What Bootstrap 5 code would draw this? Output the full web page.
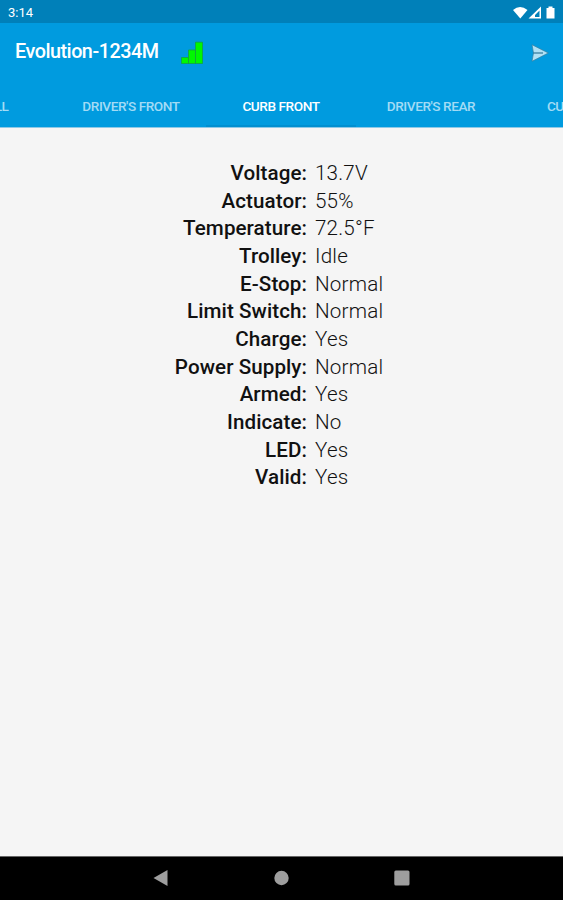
<!DOCTYPE html>
<html lang="en">
<head>
<meta charset="utf-8">
<meta name="viewport" content="width=device-width, initial-scale=1">
<title>Evolution-1234M</title>
<link href="https://cdn.jsdelivr.net/npm/bootstrap@5.3.0/dist/css/bootstrap.min.css" rel="stylesheet">
<style>
body{font-family:Roboto,sans-serif;background:#f5f5f5;color:#111}
.status-bar{height:23px;background:#0080b9;font-size:13px;padding:2px 7px 0 8px}
.app-head{background:#009bdf;height:105px;border-bottom:1px solid #8fc9e6}
.title-bar{height:61px;padding:0 14px 0 15px}
.title-text{font-size:19.8px;font-weight:500;line-height:24px;margin-top:-3px;width:143px;letter-spacing:-.48px}
.signal{margin:-2px 0 0 23px}
.send{margin-top:-1px}
.tab-strip{height:43px;margin-left:-94px;width:750px}
.tab-strip .nav-link{width:150px;padding:0;height:43px;line-height:45px;font-size:13.6px;font-weight:500;letter-spacing:-.43px;color:#a3dbf5;text-align:center;white-space:nowrap;border-radius:0}
.tab-strip .nav-link.active{color:#fff;border-bottom:2px solid #008fd0}
.readings{padding-top:32px;font-size:20.6px}
.reading{height:27.66px;line-height:27.66px}
.reading dt{width:307px;font-weight:500;text-align:right;letter-spacing:.07px}
.reading dd{margin:0 0 0 8px;font-weight:300;letter-spacing:.2px}
.system-nav{height:44px;background:#000;border-top:1px solid #666}
.system-nav svg{width:120.5px;height:43px}
</style>
<script src="https://cdn.jsdelivr.net/npm/bootstrap@5.3.0/dist/js/bootstrap.bundle.min.js"></script>
</head>
<body class="d-flex flex-column vh-100 overflow-hidden">
<div class="status-bar d-flex align-items-center justify-content-between text-white flex-shrink-0">
  <span>3:14</span>
  <svg width="43" height="14" viewBox="0 0 43 14" fill="#fff" aria-hidden="true">
    <path d="M0 4Q7 -2 14.500 4L7.300 12.500Z"/>
    <path fill-rule="evenodd" d="M28 .5V12.500H15.500ZM26.500 4.500L22 9V11H26.500Z"/>
    <path d="M33.500 2H35.500V.5H39.500V2H41.500V12.500H33.500Z"/>
  </svg>
</div>
<header class="app-head flex-shrink-0 overflow-hidden">
  <div class="title-bar d-flex align-items-center">
    <h1 class="title-text text-white mb-0 text-nowrap">Evolution-1234M</h1>
    <svg class="signal" width="23" height="23" viewBox="0 0 23 23" fill="#00f800" stroke="#12a53e" stroke-width=".8" role="img" aria-label="Signal strength">
      <path d="M.5 16.500H7.500V22.500H.5ZM7.500 9H14.500V22.500H7.500ZM14.500 1.200H21.500V22.500H14.500Z"/>
    </svg>
    <svg class="send ms-auto" width="18" height="18" viewBox="0 0 18 18" fill="#b0e1f5" stroke="#397f9f" stroke-width=".7" role="img" aria-label="Send">
      <path d="M1 .7L17.300 9L1 17.300L2.500 9Z"/><path d="M2 9H12" stroke-width="1.300"/>
    </svg>
  </div>
  <nav class="tab-strip nav flex-nowrap">
    <a class="nav-link" href="#">OVERALL</a>
    <a class="nav-link" href="#">DRIVER'S FRONT</a>
    <a class="nav-link active" href="#" aria-current="page">CURB FRONT</a>
    <a class="nav-link" href="#">DRIVER'S REAR</a>
    <a class="nav-link" href="#">CURB REAR</a>
  </nav>
</header>
<main class="flex-grow-1">
  <dl class="readings mb-0">
    <div class="reading d-flex"><dt>Voltage:</dt><dd>13.7V</dd></div>
    <div class="reading d-flex"><dt>Actuator:</dt><dd>55%</dd></div>
    <div class="reading d-flex"><dt>Temperature:</dt><dd>72.5°F</dd></div>
    <div class="reading d-flex"><dt>Trolley:</dt><dd>Idle</dd></div>
    <div class="reading d-flex"><dt>E-Stop:</dt><dd>Normal</dd></div>
    <div class="reading d-flex"><dt>Limit Switch:</dt><dd>Normal</dd></div>
    <div class="reading d-flex"><dt>Charge:</dt><dd>Yes</dd></div>
    <div class="reading d-flex"><dt>Power Supply:</dt><dd>Normal</dd></div>
    <div class="reading d-flex"><dt>Armed:</dt><dd>Yes</dd></div>
    <div class="reading d-flex"><dt>Indicate:</dt><dd>No</dd></div>
    <div class="reading d-flex"><dt>LED:</dt><dd>Yes</dd></div>
    <div class="reading d-flex"><dt>Valid:</dt><dd>Yes</dd></div>
  </dl>
</main>
<footer class="system-nav d-flex justify-content-center flex-shrink-0">
  <svg viewBox="0 0 120.5 43" fill="#9e9e9e" role="img" aria-label="Back"><path d="M52.500 21L66.500 13V29Z"/></svg>
  <svg viewBox="0 0 120.5 43" fill="#9e9e9e" role="img" aria-label="Home"><circle cx="60.500" cy="21" r="7.200"/></svg>
  <svg viewBox="0 0 120.5 43" fill="#9e9e9e" role="img" aria-label="Recent apps"><rect x="52.300" y="13.500" width="15.200" height="15" rx="1.500"/></svg>
</footer>
</body>
</html>
